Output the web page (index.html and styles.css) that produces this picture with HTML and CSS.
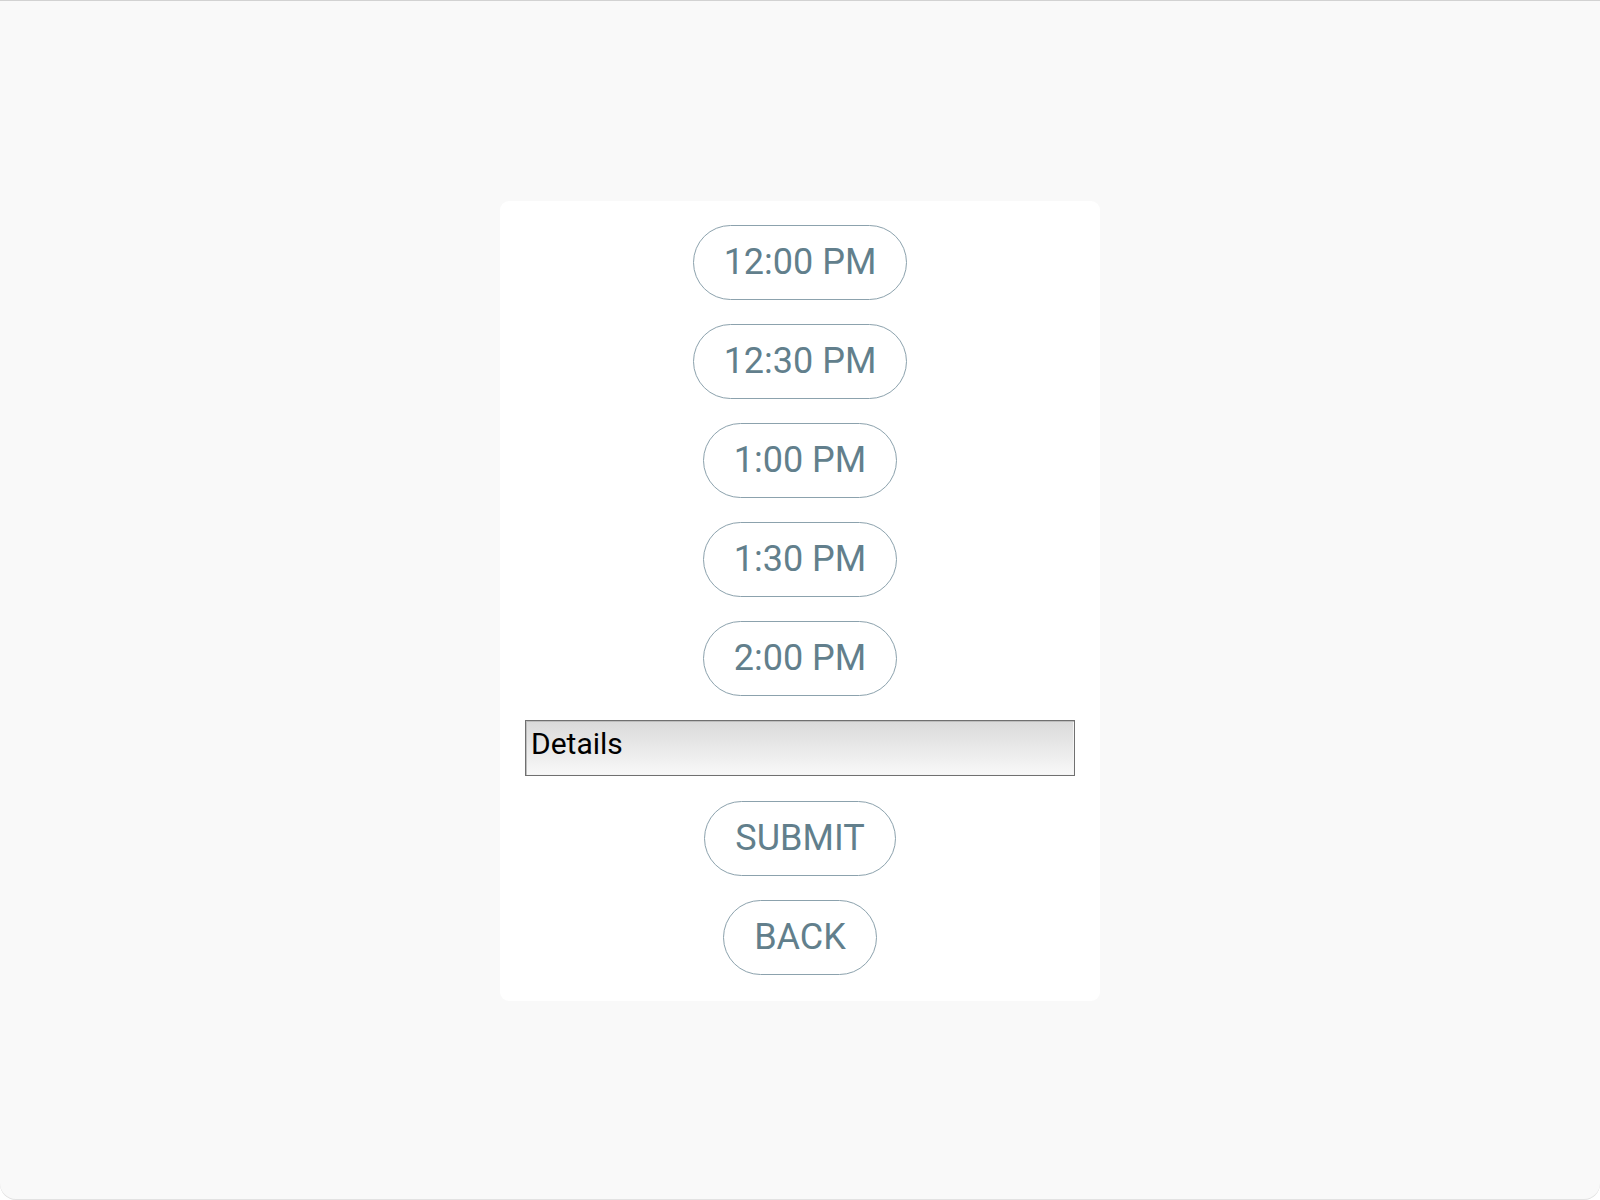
FILE: index.html
```html
<!DOCTYPE html>
<html lang="en">
<head>
<meta charset="utf-8">
<title>Pick a time</title>
<link rel="stylesheet" href="styles.css">
</head>
<body>
<div class="frame">
  <form class="card">
    <button type="button" class="pill">12:00 PM</button>
    <button type="button" class="pill">12:30 PM</button>
    <button type="button" class="pill">1:00 PM</button>
    <button type="button" class="pill">1:30 PM</button>
    <button type="button" class="pill">2:00 PM</button>
    <textarea class="details" rows="1">Details</textarea>
    <button type="button" class="pill">SUBMIT</button>
    <button type="button" class="pill">BACK</button>
  </form>
</div>
</body>
</html>
```

FILE: styles.css
```css
html, body {
  margin: 0;
  padding: 0;
  background: #ffffff;
}

.frame {
  box-sizing: border-box;
  width: 1600px;
  height: 1200px;
  background: #f9f9f9;
  border-top: 1px solid #d2d2d2;
  border-radius: 0 0 16px 16px;
  box-shadow: inset 0 -1px 0 #e2e2e2;
  display: flex;
  align-items: center;
  justify-content: center;
  font-family: Roboto, "Liberation Sans", sans-serif;
}

.card {
  box-sizing: border-box;
  width: 600px;
  height: 800px;
  background: #ffffff;
  border-radius: 9px;
  padding: 24px 25px 25px;
  display: flex;
  flex-direction: column;
  align-items: center;
  gap: 24px;
}

.pill {
  font-family: Roboto, "Liberation Sans", sans-serif;
  font-size: 36px;
  line-height: normal;
  color: #627f8c;
  background: #ffffff;
  border: 1px solid #8ca2ad;
  border-radius: 999px;
  padding: 15.5px 30px;
  margin: 0;
  cursor: pointer;
}

.details {
  box-sizing: border-box;
  width: 550px;
  height: 56px;
  margin: 0 0 1px;
  padding: 5px 5px 3px;
  font-family: Roboto, "Liberation Sans", sans-serif;
  font-size: 30px;
  line-height: normal;
  color: #000000;
  border: 1px solid #707070;
  box-shadow: inset 1px 1px 0 #bdbdbd, inset -1px -1px 0 #f4f4f4;
  background: linear-gradient(to bottom, #dadada, #f8f8f8);
  resize: none;
  overflow: hidden;
}
```
